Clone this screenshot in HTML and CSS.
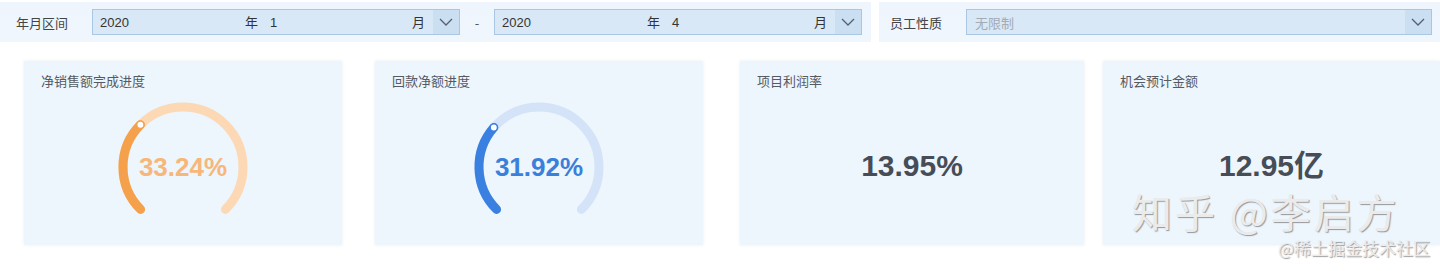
FILE: index.html
```html
<!DOCTYPE html>
<html lang="zh">
<head>
<meta charset="utf-8">
<link rel="stylesheet" href="styles.css">
</head>
<body>
<div class="page">
  <div class="filters">
    <div class="panel panel-date">
      <span class="label">年月区间</span>
      <div class="select">
        <div class="seg seg-year"><span>2020</span><span>年</span></div>
        <div class="seg seg-month"><span>1</span><span>月</span></div>
        <div class="btn"><svg width="14" height="8" viewBox="0 0 14 8"><path d="M1 1 L7 7 L13 1" fill="none" stroke="#556070" stroke-width="1.3"/></svg></div>
      </div>
      <span class="dash">-</span>
      <div class="select">
        <div class="seg seg-year"><span>2020</span><span>年</span></div>
        <div class="seg seg-month"><span>4</span><span>月</span></div>
        <div class="btn"><svg width="14" height="8" viewBox="0 0 14 8"><path d="M1 1 L7 7 L13 1" fill="none" stroke="#556070" stroke-width="1.3"/></svg></div>
      </div>
    </div>
    <div class="panel panel-type">
      <span class="label">员工性质</span>
      <div class="select select-wide">
        <div class="seg seg-placeholder">无限制</div>
        <div class="btn"><svg width="14" height="8" viewBox="0 0 14 8"><path d="M1 1 L7 7 L13 1" fill="none" stroke="#556070" stroke-width="1.3"/></svg></div>
      </div>
    </div>
  </div>

  <div class="cards">
    <div class="card card-1">
      <div class="card-title">净销售额完成进度</div>
      <div class="card-body">
        <div class="gauge">
          <svg width="140" height="140" viewBox="0 0 140 140">
            <path d="M27.57 112.43 A60 60 0 1 1 112.43 112.43" fill="none" stroke="#fdd8b4" stroke-width="9" stroke-linecap="round"/>
            <path d="M27.57 112.43 A60 60 0 0 1 27.39 27.76" fill="none" stroke="#f5a04b" stroke-width="9" stroke-linecap="round"/>
            <circle cx="27.39" cy="27.76" r="3.6" fill="#fff" stroke="#f5a04b" stroke-width="1.4"/>
          </svg>
          <div class="gauge-value orange">33.24%</div>
        </div>
      </div>
    </div>
    <div class="card card-2">
      <div class="card-title">回款净额进度</div>
      <div class="card-body">
        <div class="gauge">
          <svg width="140" height="140" viewBox="0 0 140 140">
            <path d="M27.57 112.43 A60 60 0 1 1 112.43 112.43" fill="none" stroke="#d4e3f8" stroke-width="9" stroke-linecap="round"/>
            <path d="M27.57 112.43 A60 60 0 0 1 24.83 30.51" fill="none" stroke="#3a80e0" stroke-width="9" stroke-linecap="round"/>
            <circle cx="24.83" cy="30.51" r="3.6" fill="#fff" stroke="#3a80e0" stroke-width="1.4"/>
          </svg>
          <div class="gauge-value blue">31.92%</div>
        </div>
      </div>
    </div>
    <div class="card card-3">
      <div class="card-title">项目利润率</div>
      <div class="card-body"><div class="big-value">13.95%</div></div>
    </div>
    <div class="card card-4">
      <div class="card-title">机会预计金额</div>
      <div class="card-body"><div class="big-value">12.95亿</div></div>
    </div>
  </div>

  <div class="wm wm-main">知乎 @李启方</div>
  <div class="wm wm-sub">@稀土掘金技术社区</div>
</div>
</body>
</html>
```
FILE: styles.css
```css
* { box-sizing: border-box; }
html, body { margin: 0; padding: 0; background: #fff; }
body {
  font-family: "Noto Sans CJK SC", "Liberation Sans", sans-serif;
  color: #444;
  width: 1440px;
  height: 271px;
  overflow: hidden;
}
.page { position: relative; width: 1440px; height: 271px; }

.filters {
  display: flex;
  padding-top: 2px;
  height: 42px;
}
.panel {
  display: flex;
  align-items: center;
  height: 40px;
  background: linear-gradient(180deg, #eef5fc 0%, #f0f6fc 100%);
}
.panel-date { width: 871px; padding-left: 16px; }
.panel-type { margin-left: 8px; flex: 1; padding-left: 11px; }

.label {
  font-size: 13px;
  color: #444;
  width: 76px;
  flex: none;
}

.select {
  display: flex;
  align-items: stretch;
  width: 368px;
  height: 26px;
  border: 1px solid #a9c7e2;
  background: #d8e8f6;
  font-size: 13px;
  color: #333;
}
.select-wide { width: 466px; }
.seg {
  display: flex;
  align-items: center;
  justify-content: space-between;
  line-height: 1;
}
.seg-year { width: 167px; padding-left: 7px; padding-right: 2px; }
.seg-month { flex: 1; padding-left: 10px; padding-right: 8px; }
.seg-placeholder { flex: 1; padding-left: 8px; color: #a3abb5; justify-content: flex-start; }
.seg span { font-family: "Liberation Sans", "Noto Sans CJK SC", sans-serif; }
.btn {
  width: 26px;
  flex: none;
  display: flex;
  align-items: center;
  justify-content: center;
  background: #cadff1;
}
.dash {
  width: 34px;
  text-align: center;
  font-size: 13px;
  color: #555;
}

.cards {
  display: flex;
  padding-top: 19px;
  padding-left: 24px;
}
.card {
  height: 184px;
  background: #edf5fd;
  box-shadow: 0 0 3px rgba(180, 200, 220, 0.3);
  display: flex;
  flex-direction: column;
  padding: 12px 17px 10px;
}
.card-1 { width: 318px; margin-right: 33px; }
.card-2 { width: 328px; margin-right: 37px; }
.card-3 { width: 344px; margin-right: 19px; }
.card-4 { flex: 1; }
.card-title {
  font-size: 13px;
  line-height: 16px;
  color: #555a63;
  margin-bottom: 8px;
}
.card-body {
  flex: 1;
  display: flex;
  align-items: center;
  justify-content: center;
}
.gauge {
  display: grid;
  place-items: center;
}
.gauge > * { grid-area: 1 / 1; }
.gauge svg { display: block; }
.gauge-value {
  font-family: "Liberation Sans", Arial, sans-serif;
  font-weight: bold;
  font-size: 26px;
}
.orange { color: #f7b77a; }
.blue { color: #3a7fd9; }
.big-value {
  font-family: "Liberation Sans", "Noto Sans CJK SC", sans-serif;
  font-weight: bold;
  font-size: 30px;
  line-height: 32px;
  color: #474d56;
}

.wm {
  position: absolute;
  white-space: nowrap;
  color: #ebebeb;
  text-shadow: 1px 1px 1px rgba(60, 60, 60, 0.5);
}
.wm-main {
  left: 1132px;
  top: 191px;
  font-size: 40px;
  line-height: 40px;
  letter-spacing: 3px;
}
.wm-sub {
  right: 10px;
  top: 238px;
  font-size: 17px;
  line-height: 20px;
}
```
